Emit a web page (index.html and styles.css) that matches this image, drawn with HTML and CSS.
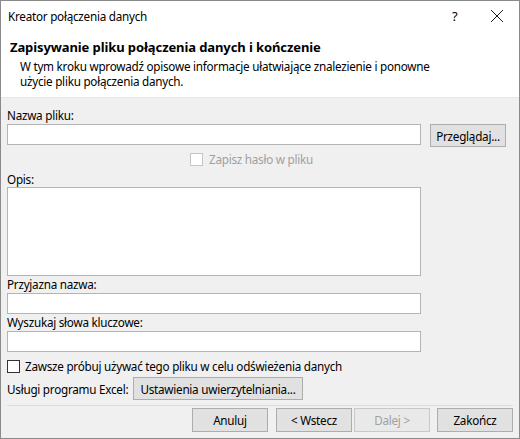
FILE: index.html
```html
<!DOCTYPE html>
<html lang="pl">
<head>
  <meta charset="UTF-8">
  <title>Kreator połączenia danych</title>
  <link rel="stylesheet" href="styles.css">
</head>
<body>

<div class="dialog">
  <div class="titlebar">
    <span class="title">Kreator połączenia danych</span>
    <span class="help">?</span>
    <span class="close">
      <svg width="14" height="14" viewBox="0 0 14 14">
        <path d="M1 1 L13 13 M13 1 L1 13" stroke="#1a1a1a" stroke-width="1" fill="none"/>
      </svg>
    </span>
  </div>

  <div class="header">
    <h1>Zapisywanie pliku połączenia danych i kończenie</h1>
    <p>W tym kroku wprowadź opisowe informacje ułatwiające znalezienie i ponowne<br>użycie pliku połączenia danych.</p>
  </div>

  <div class="content">
    <label class="field-label">Nazwa pliku:</label>
    <div class="file-row">
      <input type="text" class="text-input">
      <button class="btn btn-browse">Przeglądaj...</button>
    </div>

    <div class="check-row centered disabled">
      <span class="checkbox"></span>
      <span>Zapisz hasło w pliku</span>
    </div>

    <label class="field-label">Opis:</label>
    <textarea class="text-area"></textarea>

    <label class="field-label">Przyjazna nazwa:</label>
    <input type="text" class="text-input">

    <label class="field-label">Wyszukaj słowa kluczowe:</label>
    <input type="text" class="text-input">

    <div class="check-row refresh">
      <span class="checkbox"></span>
      <span>Zawsze próbuj używać tego pliku w celu odświeżenia danych</span>
    </div>

    <div class="excel-row">
      <span class="excel-label">Usługi programu Excel:</span>
      <button class="btn btn-auth">Ustawienia uwierzytelniania...</button>
    </div>
  </div>

  <div class="footer">
    <button class="btn">Anuluj</button>
    <button class="btn btn-back">&lt; Wstecz</button>
    <button class="btn" disabled>Dalej &gt;</button>
    <button class="btn btn-finish">Zakończ</button>
  </div>
</div>

</body>
</html>
```

FILE: styles.css
```css
* {
  box-sizing: border-box;
}
body {
  margin: 0;
  font-family: "Noto Sans", Arial, sans-serif;
  font-size: 11.7px;
  letter-spacing: -0.25px;
  color: #000;
}
.dialog {
  width: 520px;
  height: 439px;
  border: 1px solid #8a8a8a;
  background: #f0f0f0;
  display: flex;
  flex-direction: column;
}
.titlebar {
  height: 30px;
  background: #fff;
  display: flex;
  align-items: center;
  padding-left: 7px;
}
.title {
  flex: 1;
}
.help {
  width: 14px;
  margin-right: 24px;
  font-size: 13px;
}
.close {
  width: 14px;
  height: 14px;
  margin-right: 15px;
  display: flex;
}
.header {
  background: #fff;
  height: 67px;
  padding: 7px 0 0 9px;
  border-bottom: 1px solid #e6e6e6;
}
.header h1 {
  margin: 0;
  font-size: 13px;
  font-weight: bold;
  line-height: 18px;
  letter-spacing: -0.1px;
}
.header p {
  margin: 3px 0 0 10px;
  line-height: 15px;
}
.content {
  padding: 9px 7px 0 6px;
}
.field-label {
  display: block;
  line-height: 16px;
  height: 16px;
}
.text-input,
.text-area {
  display: block;
  width: 414px;
  height: 21px;
  margin: 1px 0 0 0;
  border: 1px solid #b4b4b4;
  background: #fff;
  font: inherit;
  padding: 0 3px;
}
.text-area {
  height: 89px;
  resize: none;
  margin-top: 0;
}
.file-row {
  display: flex;
  align-items: flex-start;
  margin-top: 1px;
  height: 23px;
}
.file-row .text-input {
  margin: 0;
}
.btn {
  font: inherit;
  letter-spacing: inherit;
  background: #e1e1e1;
  border: 1px solid #adadad;
  color: #000;
  height: 24px;
  width: 76px;
  padding: 0;
}
.btn:disabled {
  color: #a0a0a0;
  background: #e9e9e9;
  border-color: #c8c8c8;
}
.btn-browse {
  margin-left: 9px;
  height: 23px;
}
.check-row {
  display: flex;
  align-items: center;
  gap: 5px;
  height: 16px;
  margin-top: 4px;
  margin-bottom: 4px;
}
.check-row.centered {
  padding-left: 183px;
}
.check-row.disabled {
  color: #a0a0a0;
  gap: 6px;
}
.checkbox {
  width: 13px;
  height: 13px;
  border: 1px solid #333;
  background: #fff;
}
.disabled .checkbox {
  border-color: #c6c6c6;
}
.check-row.refresh {
  margin-top: 6px;
  margin-bottom: 0;
}
.excel-row {
  display: flex;
  align-items: center;
  margin-top: 3px;
}
.excel-label {
  width: 126px;
}
.btn-auth {
  width: 170px;
  height: 23px;
}
.footer {
  margin: 5px 6px 0 6px;
  padding-top: 2px;
  border-top: 1px solid #dcdcdc;
  display: flex;
  justify-content: flex-end;
  gap: 2px;
}
.footer .btn-back {
  margin-left: 6px;
}
.footer .btn-finish {
  margin-left: 5px;
}
```
